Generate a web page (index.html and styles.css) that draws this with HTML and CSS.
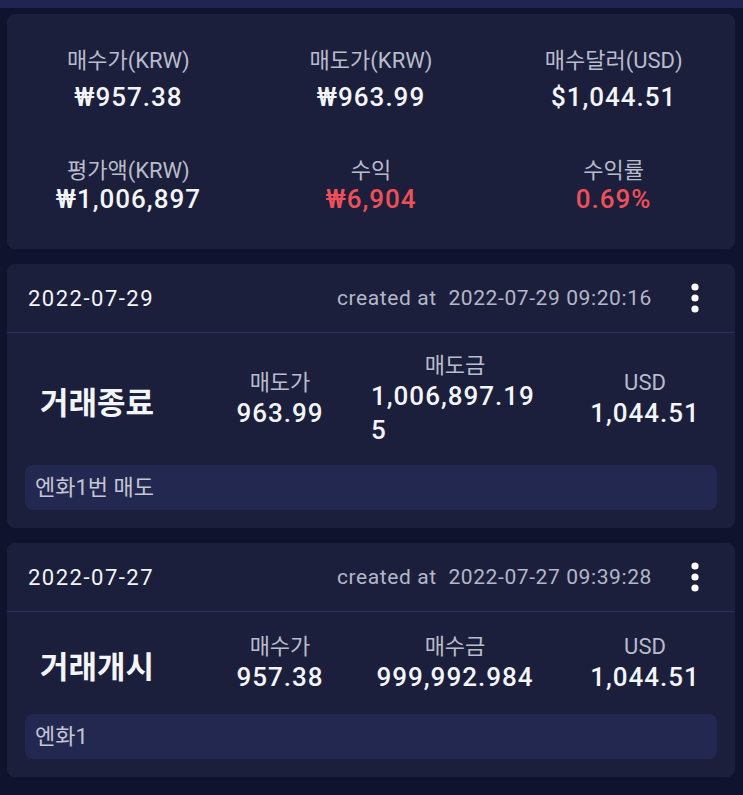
FILE: index.html
```html
<!DOCTYPE html>
<html lang="ko">
<head>
<meta charset="UTF-8">
<meta name="viewport" content="width=device-width, initial-scale=1.0">
<title>거래 내역</title>
<link rel="stylesheet" href="styles.css">
</head>
<body>

<div class="top-bar"></div>

<div class="list">
    <!-- summary -->
    <div class="card summary">
        <div class="stat">
            <div class="stat-label">매수가(KRW)</div>
            <div class="stat-value">₩957.38</div>
        </div>
        <div class="stat">
            <div class="stat-label">매도가(KRW)</div>
            <div class="stat-value">₩963.99</div>
        </div>
        <div class="stat">
            <div class="stat-label">매수달러(USD)</div>
            <div class="stat-value">$1,044.51</div>
        </div>
        <div class="stat second">
            <div class="stat-label">평가액(KRW)</div>
            <div class="stat-value">₩1,006,897</div>
        </div>
        <div class="stat second">
            <div class="stat-label">수익</div>
            <div class="stat-value red">₩6,904</div>
        </div>
        <div class="stat second">
            <div class="stat-label">수익률</div>
            <div class="stat-value red">0.69%</div>
        </div>
    </div>

    <!-- trade: sell -->
    <div class="card trade">
        <div class="trade-header">
            <div class="trade-date">2022-07-29</div>
            <div class="trade-created">created at&nbsp; 2022-07-29 09:20:16</div>
            <div class="kebab">
                <svg width="10" height="30" viewBox="0 0 10 30"><circle cx="5" cy="4" r="3.6" fill="#fff"/><circle cx="5" cy="15" r="3.6" fill="#fff"/><circle cx="5" cy="26" r="3.6" fill="#fff"/></svg>
            </div>
        </div>
        <div class="trade-body">
            <div class="trade-title">거래종료</div>
            <div class="col">
                <div class="col-label">매도가</div>
                <div class="col-value">963.99</div>
            </div>
            <div class="col wide">
                <div class="col-label">매도금</div>
                <div class="col-value">1,006,897.195</div>
            </div>
            <div class="col">
                <div class="col-label">USD</div>
                <div class="col-value">1,044.51</div>
            </div>
        </div>
        <div class="memo">엔화1번 매도</div>
    </div>

    <!-- trade: buy -->
    <div class="card trade">
        <div class="trade-header">
            <div class="trade-date">2022-07-27</div>
            <div class="trade-created">created at&nbsp; 2022-07-27 09:39:28</div>
            <div class="kebab">
                <svg width="10" height="30" viewBox="0 0 10 30"><circle cx="5" cy="4" r="3.6" fill="#fff"/><circle cx="5" cy="15" r="3.6" fill="#fff"/><circle cx="5" cy="26" r="3.6" fill="#fff"/></svg>
            </div>
        </div>
        <div class="trade-body">
            <div class="trade-title">거래개시</div>
            <div class="col">
                <div class="col-label">매수가</div>
                <div class="col-value">957.38</div>
            </div>
            <div class="col wide">
                <div class="col-label">매수금</div>
                <div class="col-value">999,992.984</div>
            </div>
            <div class="col">
                <div class="col-label">USD</div>
                <div class="col-value">1,044.51</div>
            </div>
        </div>
        <div class="memo">엔화1</div>
    </div>
</div>

</body>
</html>
```

FILE: styles.css
```css
body {
    background-color: #10132d;
    color: #f4f5f8;
    font-family: Roboto, "Noto Sans CJK KR", sans-serif;
    margin: 0;
    padding: 0;
}
.top-bar {
    height: 8px;
    background-color: #1f2550;
}
.list {
    display: flex;
    flex-direction: column;
    gap: 15px;
    padding: 6px 8px 0 7px;
}
.card {
    background-color: #1b1f3c;
    border-radius: 8px;
}

/* summary card */
.summary {
    display: grid;
    grid-template-columns: 1fr 1fr 1fr;
    row-gap: 46px;
    padding: 34px 0 35px;
}
.stat {
    display: flex;
    flex-direction: column;
    align-items: center;
    gap: 8px;
}
.stat.second {
    gap: 0;
}
.stat-label {
    font-size: 22px;
    line-height: 26px;
    color: #b9bccb;
}
.stat-value {
    font-size: 26px;
    line-height: 30px;
    font-weight: 500;
    letter-spacing: 1px;
}
.red {
    color: #ef5058;
}

/* trade cards */
.trade-header {
    display: flex;
    align-items: center;
    height: 68px;
    padding: 0 28px 0 21px;
    border-bottom: 1px solid #2b3158;
}
.trade-date {
    flex: 1;
    font-size: 22px;
    letter-spacing: 1.5px;
}
.trade-created {
    font-size: 21px;
    letter-spacing: 0.6px;
    color: #b4b7c7;
}
.kebab {
    width: 24px;
    margin-left: 31px;
    display: flex;
    justify-content: center;
}
.kebab svg {
    display: block;
}
.trade-body {
    display: grid;
    grid-template-columns: 198px 150px 200px 1fr;
    grid-auto-rows: minmax(64px, auto);
    align-items: center;
    padding-top: 20px;
}
.trade-title {
    padding-left: 33px;
    font-size: 31px;
    font-weight: 700;
}
.col {
    text-align: center;
}
.col.wide {
    padding: 0 16px;
}
.col-label {
    font-size: 22px;
    line-height: 26px;
    color: #b9bccb;
}
.col-value {
    font-size: 26px;
    line-height: 34px;
    font-weight: 500;
    letter-spacing: 1px;
    overflow-wrap: anywhere;
}
.col.wide .col-value {
    display: inline-block;
    text-align: left;
}
.memo {
    margin: 18px;
    height: 45px;
    line-height: 45px;
    padding-left: 10px;
    background-color: #232850;
    border-radius: 8px;
    font-size: 22px;
    color: #c3c6d4;
}
```
